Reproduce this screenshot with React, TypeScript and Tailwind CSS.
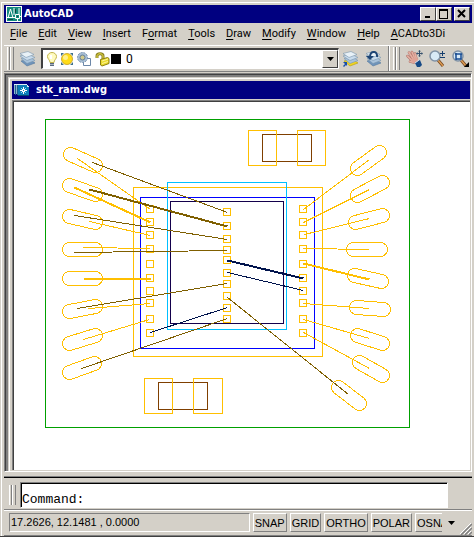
import type { ReactNode } from "react"

const MENU_ITEMS = [
  { label: "File", key: 0 },
  { label: "Edit", key: 0 },
  { label: "View", key: 0 },
  { label: "Insert", key: 0 },
  { label: "Format", key: 1 },
  { label: "Tools", key: 0 },
  { label: "Draw", key: 0 },
  { label: "Modify", key: 0 },
  { label: "Window", key: 0 },
  { label: "Help", key: 0 },
  { label: "ACADto3Di", key: 0 },
]

const MODES = ["SNAP", "GRID", "ORTHO", "POLAR"]

const YELLOW = "#ffbf00"
const OLIVE = "#7f5f00"
const NAVY = "#00134c"
const BROWN = "#7f3f00"

// x, y, width, height, color
const OUTLINES: [number, number, number, number, string][] = [
  [45, 119, 364, 308, "#00a000"],
  [133, 187, 189, 169, YELLOW],
  [140, 197, 174, 151, "#0000ff"],
  [167, 182, 119, 147, "#00bfff"],
  [170, 201, 113, 122, "#13004c"],
  [262, 134, 49, 27, BROWN],
  [248, 130, 28, 35, YELLOW],
  [297, 130, 28, 35, YELLOW],
  [158, 382, 49, 27, BROWN],
  [144, 378, 28, 35, YELLOW],
  [193, 378, 29, 35, YELLOW],
]

const SIDE_PADS = [205, 218, 231, 245, 260, 274, 287, 299, 315, 329]
const CHIP_PADS = [208, 222, 235, 246, 256, 269, 280, 292, 304, 315]

// Both end centers of every lead finger
const FINGERS = [
  [70, 154, 95, 165],
  [69, 185, 95, 194],
  [69, 216, 95, 222],
  [69, 249, 95, 249],
  [69, 278, 95, 278],
  [69, 311, 95, 306],
  [69, 343, 95, 335],
  [69, 372, 94, 363],
  [357, 168, 379, 152],
  [357, 195, 382, 182],
  [355, 222, 382, 215],
  [353, 249, 380, 249],
  [354, 275, 381, 281],
  [356, 307, 383, 309],
  [357, 335, 382, 343],
  [359, 362, 382, 375],
  [338, 387, 359, 403],
]

// x1, y1, x2, y2, color, thickness
const WIRES: [number, number, number, number, string, number][] = [
  [77, 158, 150, 209, YELLOW, 1],
  [74, 187, 150, 222, YELLOW, 2],
  [89, 221, 150, 235, YELLOW, 1],
  [83, 247, 150, 248, YELLOW, 1],
  [83, 278, 150, 278, YELLOW, 2],
  [88, 308, 150, 303, YELLOW, 1],
  [83, 339, 149, 319, YELLOW, 1],
  [303, 209, 369, 159, YELLOW, 1],
  [303, 222, 369, 189, YELLOW, 1],
  [304, 234, 369, 218, YELLOW, 1],
  [303, 248, 369, 249, YELLOW, 1],
  [303, 263, 369, 279, YELLOW, 2],
  [303, 303, 369, 308, YELLOW, 1],
  [303, 319, 369, 338, YELLOW, 1],
  [303, 332, 369, 368, YELLOW, 1],
  [92, 162, 227, 212, OLIVE, 1],
  [89, 189, 227, 226, OLIVE, 2],
  [74, 215, 227, 239, OLIVE, 1],
  [74, 252, 227, 250, OLIVE, 1],
  [77, 308, 227, 283, OLIVE, 1],
  [81, 368, 227, 318, OLIVE, 1],
  [227, 297, 348, 394, OLIVE, 1],
  [227, 260, 303, 278, NAVY, 2],
  [227, 272, 303, 290, NAVY, 1],
  [150, 332, 227, 307, NAVY, 1],
]

function Finger({ ends }: { ends: number[] }) {
  const [x1, y1, x2, y2] = ends
  const length = Math.hypot(x2 - x1, y2 - y1)
  const angle = (Math.atan2(y2 - y1, x2 - x1) * 180) / Math.PI
  return (
    <rect
      x={-7}
      y={-7}
      width={length + 14}
      height={14}
      rx={7}
      stroke={YELLOW}
      transform={`translate(${x1 + 0.5} ${y1 + 0.5}) rotate(${angle})`}
    />
  )
}

function Drawing() {
  return (
    <svg
      viewBox="14 102 456 368"
      preserveAspectRatio="xMinYMin meet"
      className="block w-full"
      fill="none"
      shapeRendering="crispEdges"
      role="img"
      aria-label="stk_ram.dwg"
    >
      {OUTLINES.map(([x, y, w, h, color]) => (
        <rect key={`${x}-${y}`} x={x + 0.5} y={y + 0.5} width={w} height={h} stroke={color} />
      ))}
      {FINGERS.map((ends) => (
        <Finger key={ends.join("-")} ends={ends} />
      ))}
      {SIDE_PADS.map((y) => (
        <g key={y} stroke={YELLOW}>
          <rect x={146.5} y={y + 0.5} width={7} height={7} />
          <rect x={299.5} y={y + 0.5} width={7} height={7} />
        </g>
      ))}
      {CHIP_PADS.map((y) => (
        <rect key={y} x={223.5} y={y + 0.5} width={7} height={7} stroke={YELLOW} />
      ))}
      {WIRES.map(([x1, y1, x2, y2, color, w]) => (
        <line key={`${x1}-${y1}`} x1={x1 + 0.5} y1={y1 + 0.5} x2={x2 + 0.5} y2={y2 + 0.5} stroke={color} strokeWidth={w} />
      ))}
    </svg>
  )
}

function AppLogo() {
  return (
    <svg width="16" height="16" viewBox="0 0 16 16" className="shrink-0" aria-hidden="true">
      <path fill="#fff" d="M0 0h16v16H0z" />
      <path fill="#138a7c" d="M1 1h14v14H1z" />
      <path fill="none" stroke="#fff" d="M2 12 4.500 3 7 12M8 2v7M13 2v6M1 11.500h8M9.500 8.500h4v4h-4zM11.500 12v4M14 10.500h2" />
      <path fill="#09443f" d="M2 13h5v1H2zM11 10h1v1h-1zM9 3h1v4H9z" />
    </svg>
  )
}

function DwgLogo() {
  return (
    <svg width="16" height="14" viewBox="0 0 16 14" className="shrink-0" shapeRendering="crispEdges" aria-hidden="true">
      <path fill="#8fb6cc" d="M0 1h4v10H0z" />
      <path fill="#1f5f90" d="M1 2h1v10H1zM3 2h1v10H3z" />
      <path fill="#0a7db8" d="M4 2h9l2 2v8H4z" />
      <path fill="#dceef6" d="M0 1h13v1H0zM13 2h1v1h1v1h-2z" />
      <path fill="#fff" d="M9 4h1v2H9zM9 9h1v2H9zM6 7h2v1H6zM11 7h2v1h-2zM8 6h3v1H8zM8 8h3v1H8zM8 7h1v1H8zM10 7h1v1h-1z" />
      <path fill="#8fdcf8" d="M7 5h1v1H7zM11 5h1v1h-1zM7 9h1v1H7zM11 9h1v1h-1z" />
      <path fill="#06456e" d="M4 12h11v1H4z" />
    </svg>
  )
}

function LayersIcon({ mark }: { mark?: "current" | "previous" }) {
  return (
    <svg width="17" height="17" viewBox="0 0 17 17" className="shrink-0" aria-hidden="true">
      <g stroke="#7893ab" strokeWidth=".6" strokeLinejoin="round">
        <path fill={mark === "current" ? "#f3d51d" : "#6f94bb"} stroke={mark === "current" ? "#b09a12" : "#54789d"} d="m2 11 8-2 6 4-8 3z" />
        <path fill="#a9c3db" d="m2 8.500 8-2 6 4-8 3z" />
        <path fill="#c9dced" d="m1 6 8-2 7 3.500-8 3z" />
        <path fill="#e8f1f7" d="m1 3.500 8-2 6 3-8 3z" />
      </g>
      {mark === "current" && <path fill="#174eac" d="M1 12h4v4l-1-1-2 2-1-1 2-2z" />}
      {mark === "previous" && (
        <>
          <path fill="none" stroke="#1d4474" strokeWidth="2" d="M12 7c1-6-6-7-7-1" />
          <path fill="#1d4474" d="M1 6h8l-4 4z" />
        </>
      )}
    </svg>
  )
}

function BulbIcon() {
  return (
    <svg width="10" height="15" viewBox="0 0 10 15" className="shrink-0" aria-hidden="true">
      <path fill="#fffbc0" stroke="#c2b44a" d="M3 10.500C3 8 .5 7 .5 4.500a4.500 4 0 0 1 9 0C9.500 7 7 8 7 10.500z" />
      <path fill="#fff" d="M3 3h2v4H3z" />
      <path fill="#5a6a80" d="M3 11h4v1H3zM3 13h4v1H3z" />
      <path fill="#a8b2bf" d="M3 12h4v1H3z" />
    </svg>
  )
}

function SunIcon() {
  return (
    <svg width="14" height="14" viewBox="0 0 14 14" className="shrink-0" aria-hidden="true">
      <path fill="#3f7089" d="M1 1h3L1 4zM10 1h3v3zM1 10v3h3zM13 10v3h-3z" />
      <circle cx="7" cy="7" r="5.500" fill="#ffdc18" stroke="#c09a20" strokeWidth=".8" />
      <circle cx="5.500" cy="5.500" r="2.500" fill="#fff08a" />
    </svg>
  )
}

function ViewportIcon() {
  return (
    <svg width="15" height="15" viewBox="0 0 15 15" className="shrink-0" aria-hidden="true">
      <path fill="#fff" stroke="#6c87a8" d="M6.500 6.500h7v7h-7z" />
      <circle cx="5.500" cy="5.500" r="5" fill="#a9bfd4" stroke="#7590ae" strokeDasharray="2 1" />
      <circle cx="5.500" cy="5.500" r="2.500" fill="#d0c98c" stroke="#64809c" />
    </svg>
  )
}

function LockIcon() {
  return (
    <svg width="15" height="15" viewBox="0 0 15 15" className="shrink-0" aria-hidden="true">
      <path fill="none" stroke="#8b8220" strokeWidth="3" d="M2 6V4c0-3 6-3 6 0v4" />
      <path fill="none" stroke="#e8dc48" d="M2 6V4c0-3 6-3 6 0v4" />
      <path fill="#eadb2d" stroke="#8b7d10" d="m5.500 7.500 7-2 1.500 1v5l-7 2.500-1.500-1z" />
      <path stroke="#fff59a" d="m7 9 6-2M7 11.500l6-2" />
    </svg>
  )
}

function PanIcon() {
  return (
    <svg width="17" height="17" viewBox="0 0 17 17" className="shrink-0" aria-hidden="true">
      <g strokeLinecap="round">
        <path stroke="#b0746c" strokeWidth="2.500" d="m1.500 6 5 5M3 2.500l4.500 7M6 2l3 7M9 3.500 10.500 9M4 11.500l4 1" />
        <path stroke="#e5b0a2" strokeWidth="1.600" d="m1.500 6 5 5M3 2.500l4.500 7M6 2l3 7M9 3.500 10.500 9M4 11.500l4 1" />
      </g>
      <path fill="#dfa396" d="m5 9 5-2 2 2 1 2-3 3-4-2z" />
      <path fill="#174a86" d="m9 13 5-3 2 5-2 2h-3z" />
      <path stroke="#c4dcf0" d="m9 13 4-3" />
      <path fill="#36516d" d="m13.500 0 1.500 1.500h-1V3h1.500V2L17 3.500 15.500 5V4H14v1.500h1L13.500 7 12 5.500h1V4h-1.500v1L10 3.500 11.500 2v1H13V1.500h-1z" />
    </svg>
  )
}

function ZoomIcon({ window }: { window?: boolean }) {
  return (
    <svg width="17" height="17" viewBox="0 0 17 17" className="shrink-0" aria-hidden="true">
      <path stroke="#714420" strokeWidth="3" d="m9 10 5 6" />
      <path stroke="#dc9b51" strokeWidth="1.500" d="m9 10 5 6" />
      <circle cx="6" cy="6" r="5" fill="#d8eaf7" stroke="#7f91a5" strokeWidth="1.500" />
      {window ? (
        <>
          <path fill="none" stroke="#174b91" strokeWidth="1.500" d="M4 4h5v5H4zM3 4h7M4 3v7" />
          <path fill="#000" d="M17 12v5h-5z" />
        </>
      ) : (
        <path stroke="#173f6d" strokeWidth="1" d="M11 3.500h5M13.500 1v5M11 7.500h5" />
      )}
    </svg>
  )
}

const Grip = () => (
  <div className="flex shrink-0 self-stretch">
    <span className="w-[3px] border-l border-r border-l-white border-r-[#808080]" />
    <span className="w-[4px] border-l border-r border-l-white border-r-[#808080]" />
  </div>
)

function CaptionButton({ label, children }: { label: string; children: ReactNode }) {
  return (
    <button
      aria-label={label}
      className="flex h-[14px] w-4 items-center justify-center border border-t-white border-r-[#404040] border-b-[#404040] border-l-white bg-[#d4d0c8]"
    >
      <svg width="10" height="10" viewBox="0 0 10 10" fill="none" stroke="#000" shapeRendering="crispEdges" aria-hidden="true">
        {children}
      </svg>
    </button>
  )
}

function ToolButton({ label, children }: { label: string; children: ReactNode }) {
  return (
    <button aria-label={label} className="flex w-[23px] shrink-0 items-center justify-center">
      {children}
    </button>
  )
}

export default function App() {
  return (
    <div className="flex min-h-screen flex-col overflow-hidden border-b border-[#404040] bg-[#d4d0c8] pt-[2px] pl-px font-[Roboto,sans-serif] text-black">
      <div className="flex flex-1 flex-col border-t border-l border-white pt-[2px] pr-[2px] pl-[2px]">
        {/* Title bar */}
        <header className="flex h-[18px] items-center bg-[#000080] px-[2px] text-white">
          <AppLogo />
          <h1 className="ml-[2px] flex-1 font-['DejaVu_Sans_Condensed','DejaVu_Sans',sans-serif] text-[11px] leading-[16px] font-bold">AutoCAD</h1>
          <CaptionButton label="Minimize">
            <path strokeWidth="2" d="M2 8h5" />
          </CaptionButton>
          <CaptionButton label="Maximize">
            <path d="M.5 1v8.500h8V1" />
            <path strokeWidth="2" d="M0 1h9" />
          </CaptionButton>
          <span className="w-[2px]" />
          <CaptionButton label="Close">
            <path strokeWidth="2" shapeRendering="auto" d="m1 1 7 7M8 1 1 8" />
          </CaptionButton>
        </header>

        <nav className="flex h-[22px] items-center overflow-hidden text-[11px] leading-[16px]">
          {MENU_ITEMS.map(({ label, key }) => (
            <button key={label} className="shrink-0 pr-[5px] pl-[6px] whitespace-pre">
              {label.slice(0, key)}
              <span className="underline underline-offset-2">{label[key]}</span>
              {label.slice(key + 1)}
            </button>
          ))}
        </nav>

        {/* Layer toolbar and the start of the standard toolbar */}
        <div className="mb-px flex h-[27px] overflow-hidden border-t border-b border-t-white border-b-[#808080]">
          <div className="flex min-w-0 flex-1 items-stretch border-r border-[#808080] py-px pr-[3px] pl-[3px]">
            <Grip />
            <span className="w-[2px]" />
            <ToolButton label="Layer Properties Manager">
              <LayersIcon />
            </ToolButton>
            <div className="my-px ml-[2px] flex min-w-0 flex-1 items-center border-t-2 border-r border-b border-l-2 border-t-[#404040] border-r-white border-b-white border-l-[#404040] bg-white pl-1">
              <div className="flex items-center gap-[3px]">
                <BulbIcon />
                <SunIcon />
                <ViewportIcon />
                <LockIcon />
              </div>
              <span className="ml-px size-[10px] shrink-0 bg-black" />
              <select aria-label="Layer" className="min-w-0 flex-1 appearance-none bg-white pl-[5px] text-[12px] leading-[16px]">
                <option>0</option>
              </select>
              <span className="pointer-events-none flex w-4 items-center justify-center self-stretch border border-t-white border-r-[#404040] border-b-[#404040] border-l-white bg-[#d4d0c8]">
                <svg width="7" height="4" viewBox="0 0 7 4" aria-hidden="true">
                  <path d="M0 0h7L3.500 4z" />
                </svg>
              </span>
            </div>
            <ToolButton label="Make Object's Layer Current">
              <LayersIcon mark="current" />
            </ToolButton>
            <ToolButton label="Layer Previous">
              <LayersIcon mark="previous" />
            </ToolButton>
          </div>
          <div className="flex shrink-0 items-stretch border-l border-white py-px pl-[3px]">
            <Grip />
            <span className="w-[3px]" />
            <ToolButton label="Pan">
              <PanIcon />
            </ToolButton>
            <ToolButton label="Zoom Realtime">
              <ZoomIcon />
            </ToolButton>
            <ToolButton label="Zoom Window">
              <ZoomIcon window />
            </ToolButton>
          </div>
        </div>

        {/* Drawing window */}
        <main className="flex flex-1 flex-col border-t border-r border-b border-l border-t-[#808080] border-r-white border-b-white border-l-[#808080]">
          <div className="flex flex-1 flex-col border-t border-l border-[#404040] bg-[#808080] pt-[2px] pl-[2px]">
            <div className="flex flex-1 flex-col border-t border-l border-[#d4d0c8] bg-[#d4d0c8]">
              <div className="flex flex-1 flex-col border-t border-l border-white pt-[2px] pr-px pb-px pl-[2px]">
                <div className="mb-px flex h-[18px] items-center bg-[#000080] px-[2px] text-white">
                  <DwgLogo />
                  <h2 className="ml-[6px] font-['DejaVu_Sans_Condensed','DejaVu_Sans',sans-serif] text-[11px] leading-[16px] font-bold">stk_ram.dwg</h2>
                </div>
                <div className="flex-1 border-t border-l border-[#808080]">
                  <div className="h-full border-t border-l border-[#404040] bg-white">
                    <Drawing />
                  </div>
                </div>
              </div>
            </div>
          </div>
        </main>

        {/* Command line */}
        <div className="mt-1 border-t border-[#808080]">
          <div className="flex border-t border-black pt-1 pr-6 pb-px pl-[5px]">
            <div className="flex py-[3px]">
              <Grip />
            </div>
            <div className="ml-1 min-w-0 flex-1 border border-t-[#808080] border-r-white border-b-white border-l-[#808080]">
              <div className="flex h-6 items-end border-t border-l border-black bg-white">
                <label htmlFor="command" className="font-['Liberation_Mono',monospace] text-[13px] leading-[14px]">
                  Command:
                </label>
                <input id="command" className="h-[14px] min-w-0 flex-1 font-['Liberation_Mono',monospace] text-[13px] outline-none" />
              </div>
            </div>
          </div>
        </div>

        <footer className="flex h-[27px] items-center gap-[3px] overflow-hidden border-t border-b border-[#808080] pl-[5px] font-['Liberation_Sans',sans-serif] text-[11px] leading-[16px] shadow-[inset_0_1px_#fff]">
          <output className="h-[19px] min-w-0 flex-1 truncate border border-t-[#808080] border-r-white border-b-white border-l-[#808080] px-px">
            17.2626, 12.1481 , 0.0000
          </output>
          {MODES.map((mode) => (
            <button
              key={mode}
              className="h-[19px] shrink-0 border border-t-white border-r-[#808080] border-b-[#808080] border-l-white px-px"
            >
              {mode}
            </button>
          ))}
          <button className="h-[19px] w-[27px] shrink-0 overflow-hidden border border-r-0 border-t-white border-b-[#808080] border-l-white px-px text-left">
            OSNAP
          </button>
          <button aria-label="Status bar menu" className="flex h-[19px] w-3 shrink-0 items-center justify-center">
            <svg width="7" height="4" viewBox="0 0 7 4" aria-hidden="true">
              <path d="M0 0h7L3.500 4z" />
            </svg>
          </button>
          <svg width="12" height="12" viewBox="0 0 12 12" className="shrink-0 self-end" aria-hidden="true">
            <path stroke="#fff" d="M0 11 11 0M4 11l7-7M8 11l3-3" />
            <path stroke="#808080" strokeWidth="1.500" d="M1 12 12 1M5 12l7-7M9 12l3-3" />
          </svg>
        </footer>
      </div>
    </div>
  )
}
